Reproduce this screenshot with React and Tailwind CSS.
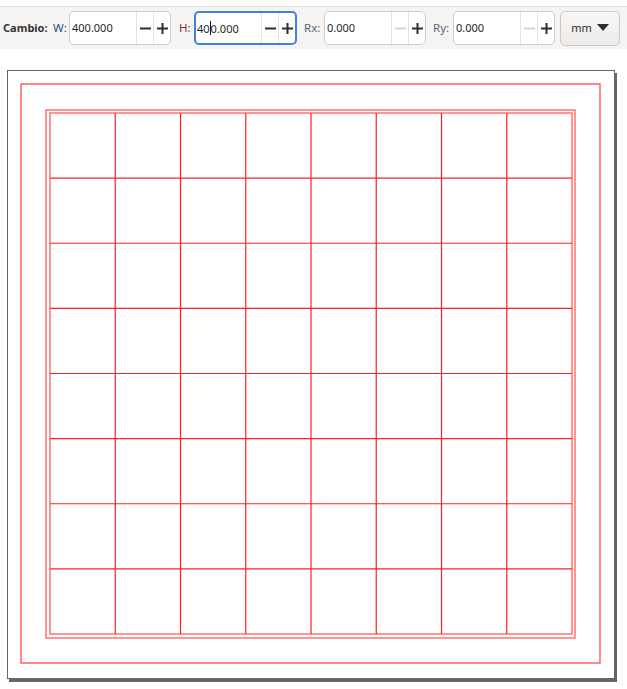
import React from "react";

function Minus({ disabled }) {
  return (
    <svg width="11" height="11" viewBox="0 0 11 11">
      <rect x="0" y="4.5" width="11" height="2" fill={disabled ? "#d4d4d4" : "#2e2e2e"} />
    </svg>
  );
}
function Plus() {
  return (
    <svg width="11" height="11" viewBox="0 0 11 11">
      <rect x="0" y="4.5" width="11" height="2" fill="#2e2e2e" />
      <rect x="4.5" y="0" width="2" height="11" fill="#2e2e2e" />
    </svg>
  );
}

function Spin({ value, focused, minusDisabled, cursor, w = "w-[102px]" }) {
  return (
    <div
      className={
        "flex h-[34px] shrink-0 items-stretch rounded-[5px] bg-white " + w + " " +
        (focused ? "border-2 border-[#3c84e0]" : "border border-[#cfcbc7]")
      }
    >
      <div className={"flex flex-1 items-center text-[11px] text-[#1f1f1f] " + (focused ? "pl-[1px]" : "pl-[2px]")}>
        {cursor ? (
          <span>
            40<span className="inline-block h-[14px] w-px translate-y-[2px] bg-[#111]" />0.000
          </span>
        ) : (
          value
        )}
      </div>
      <div className="flex w-[17px] items-center justify-center border-l border-[#e4e2df]">
        <Minus disabled={minusDisabled} />
      </div>
      <div className="flex w-[17px] items-center justify-center border-l border-[#e4e2df]">
        <Plus />
      </div>
    </div>
  );
}

export default function App() {
  const gx0 = 42, gx1 = 564, gy0 = 42, gy1 = 563;
  const lines = [];
  for (let i = 1; i < 8; i++) {
    const x = gx0 + ((gx1 - gx0) * i) / 8;
    const y = gy0 + ((gy1 - gy0) * i) / 8;
    lines.push(<line key={"v" + i} x1={x} y1={gy0} x2={x} y2={gy1} stroke="#ff2020" strokeWidth="1.2" />);
    lines.push(<line key={"h" + i} x1={gx0} y1={y} x2={gx1} y2={y} stroke="#ff2020" strokeWidth="1.2" />);
  }
  return (
    <div className="h-[689px] w-[627px] overflow-hidden bg-white" style={{ fontFamily: '"Noto Sans", "Open Sans", sans-serif' }}>
      <div className="mt-[6px] flex h-[43px] items-center border-t border-[#dfdedc] bg-[#f5f4f2] pl-[3px] text-[11.5px]">
        <span className="w-[50px] shrink-0 whitespace-nowrap text-[11px] font-bold text-[#333]">Cambio:</span>
        <span className="w-[16px] shrink-0 text-[#2c4f7c]">W:</span>
        <Spin value="400.000" />
        <span className="w-[23px] shrink-0 pl-[8px] text-[#7a3436]">H:</span>
        <Spin value="400.000" focused cursor w="w-[103px]" />
        <span className="w-[27px] shrink-0 pl-[7px] text-[#56657a]">Rx:</span>
        <Spin value="0.000" minusDisabled />
        <span className="w-[27px] shrink-0 pl-[7px] text-[#56657a]">Ry:</span>
        <Spin value="0.000" minusDisabled />
        <div className="ml-[5px] flex h-[35px] w-[60px] shrink-0 items-center justify-center gap-[5px] rounded-[5px] border border-[#cdc8c3] bg-gradient-to-b from-[#f8f7f6] to-[#edebe9] text-[11px] text-[#2e2e2e]">
          <span>mm</span>
          <svg width="12" height="8" viewBox="0 0 12 8">
            <path d="M0 0 L12 0 L6 7 Z" fill="#2e2e2e" />
          </svg>
        </div>
      </div>
      <div className="ml-[7px] mt-[21px] h-[609px] w-[608px] border border-[#666] shadow-[2px_3px_0_#666]">
        <svg width="606" height="607" viewBox="0 0 606 607" className="block">
          <rect x="13" y="13" width="579" height="579" fill="none" stroke="#ff3a3a" strokeOpacity="0.85" strokeWidth="1.4" />
          <rect x="38" y="39" width="529" height="528" fill="none" stroke="#ff4040" strokeOpacity="0.7" strokeWidth="1.6" />
          <rect x={gx0} y={gy0} width={gx1 - gx0} height={gy1 - gy0} fill="none" stroke="#ff4040" strokeOpacity="0.7" strokeWidth="1.6" />
          {lines}
        </svg>
      </div>
    </div>
  );
}
